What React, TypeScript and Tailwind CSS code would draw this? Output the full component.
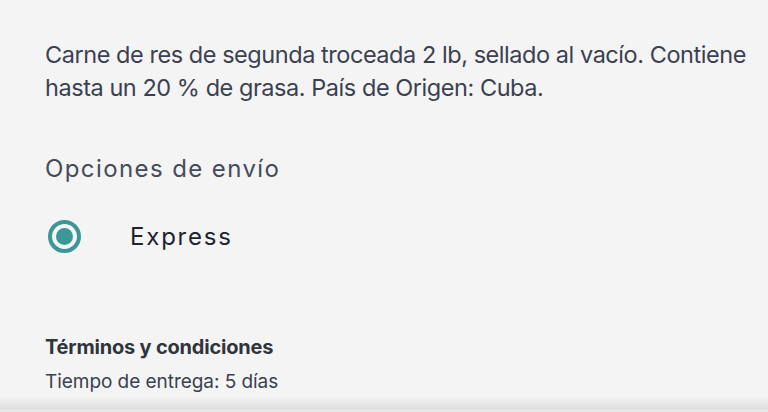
import React from "react";

export default function App() {
  return (
    <div
      className="relative w-[768px] h-[412px] overflow-hidden bg-[#f4f4f4]"
      style={{ fontFamily: "Inter, 'Noto Sans', sans-serif" }}
    >
      <div className="pl-[45px] pr-[10px] pt-[38px]">
        <p className="text-[23.5px] leading-[33px] text-[#3b4150] tracking-[-0.45px]">
          Carne de res de segunda troceada 2 lb, sellado al vacío. Contiene hasta un 20 % de grasa. País de Origen: Cuba.
        </p>
        <h2 className="mt-[50px] text-[24px] leading-[30px] tracking-[1.4px] text-[#444b59]">
          Opciones de envío
        </h2>
        <div className="mt-[36px] flex items-center">
          <div className="ml-[3px] w-[33px] h-[33px] rounded-full border-[4px] border-[#3a9896] flex items-center justify-center">
            <div className="w-[17px] h-[17px] rounded-full bg-[#3a9896]" />
          </div>
          <span className="ml-[49px] text-[24px] leading-[30px] tracking-[1.8px] text-[#1e2330]">
            Express
          </span>
        </div>
        <h3 className="mt-[81px] text-[20px] leading-[26px] font-bold text-[#30343d] tracking-[-0.2px]">
          Términos y condiciones
        </h3>
        <p className="mt-[9px] text-[19px] leading-[26px] text-[#3b4150] tracking-[-0.05px]">
          Tiempo de entrega: 5 días
        </p>
      </div>
      <div className="absolute left-0 right-0 bottom-0 h-[16px] bg-gradient-to-b from-[#f4f4f4] to-[#d9d9d9]" />
      <div className="absolute left-0 right-0 bottom-0 h-[3px] bg-[#e6e6e6]" />
    </div>
  );
}
